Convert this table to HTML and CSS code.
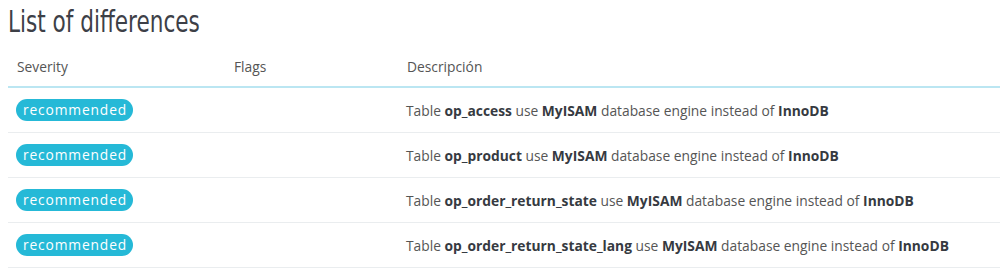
FILE: index.html
```html
<!DOCTYPE html>
<html>
<head>
<meta charset="utf-8">
<link rel="stylesheet" href="styles.css">
</head>
<body>
<h3 class="title"><span class="title-text">List of differences</span></h3>
<table class="diff-table">
  <thead>
    <tr>
      <th class="col-sev">Severity</th>
      <th class="col-flags">Flags</th>
      <th class="col-desc">Descripción</th>
    </tr>
  </thead>
  <tbody>
    <tr>
      <td><span class="badge">recommended</span></td>
      <td></td>
      <td>Table <b>op_access</b> use <b>MyISAM</b> database engine instead of <b>InnoDB</b></td>
    </tr>
    <tr>
      <td><span class="badge">recommended</span></td>
      <td></td>
      <td>Table <b>op_product</b> use <b>MyISAM</b> database engine instead of <b>InnoDB</b></td>
    </tr>
    <tr>
      <td><span class="badge">recommended</span></td>
      <td></td>
      <td>Table <b>op_order_return_state</b> use <b>MyISAM</b> database engine instead of <b>InnoDB</b></td>
    </tr>
    <tr>
      <td><span class="badge">recommended</span></td>
      <td></td>
      <td>Table <b>op_order_return_state_lang</b> use <b>MyISAM</b> database engine instead of <b>InnoDB</b></td>
    </tr>
  </tbody>
</table>
</body>
</html>
```
FILE: styles.css
```css
body {
  margin: 0;
  padding: 0 0 0 8px;
  background: #fff;
  font-family: "Open Sans", sans-serif;
  font-size: 13.8px;
  color: #555;
}
.title {
  margin: 0;
  padding-top: 3px;
  height: 45px;
  font-family: "DejaVu Sans", sans-serif;
  font-stretch: condensed;
  font-weight: normal;
  font-size: 30px;
  line-height: 38px;
  color: #3d4047;
}
.title-text {
  display: inline-block;
  transform: scaleX(0.8);
  transform-origin: left center;
}
.diff-table {
  width: 992px;
  border-collapse: collapse;
}
.diff-table th {
  text-align: left;
  font-weight: normal;
  color: #555;
  height: 36px;
  padding: 0 9px 2px;
  vertical-align: middle;
  border-bottom: 2px solid #bbe6f2;
}
.col-sev { width: 199px; }
.col-flags { width: 155px; }
.diff-table td {
  height: 44px;
  padding: 0 8px;
  vertical-align: middle;
  border-bottom: 1px solid #eaedef;
  color: #555;
}
.diff-table td b {
  color: #363a41;
  font-weight: 700;
}
.badge {
  display: inline-block;
  background: #25b9d7;
  color: #fff;
  font-size: 13.8px;
  letter-spacing: 0.85px;
  line-height: 22px;
  padding: 0 6px 0 7px;
  border-radius: 11px;
}
```
